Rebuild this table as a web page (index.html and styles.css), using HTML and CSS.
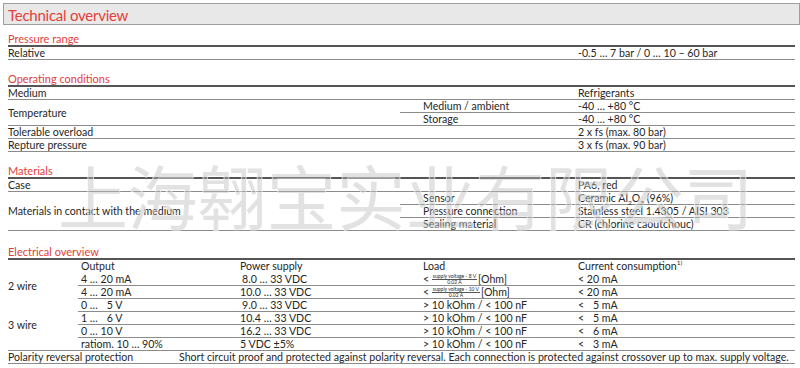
FILE: index.html
```html
<!DOCTYPE html>
<html>
<head>
<meta charset="utf-8">
<link rel="stylesheet" href="styles.css">
</head>
<body>
<div class="page">
  <div class="header"><h1 class="title">Technical overview</h1></div>

  <section class="sec sec-first">
    <h2 class="sec-title">Pressure range</h2>
    <div class="grid3">
      <div class="cell">Relative</div>
      <div class="cell"></div>
      <div class="cell">-0.5 … 7 bar / 0 … 10 – 60 bar</div>
    </div>
  </section>

  <section class="sec">
    <h2 class="sec-title">Operating conditions</h2>
    <div class="grid3">
      <div class="cell">Medium</div>
      <div class="cell"></div>
      <div class="cell">Refrigerants</div>
      <div class="cell span2 mid">Temperature</div>
      <div class="cell sub">Medium / ambient</div>
      <div class="cell">-40 … +80 °C</div>
      <div class="cell sub">Storage</div>
      <div class="cell">-40 … +80 °C</div>
      <div class="cell">Tolerable overload</div>
      <div class="cell"></div>
      <div class="cell">2 x fs (max. 80 bar)</div>
      <div class="cell">Repture pressure</div>
      <div class="cell"></div>
      <div class="cell">3 x fs (max. 90 bar)</div>
    </div>
  </section>

  <section class="sec">
    <h2 class="sec-title">Materials</h2>
    <div class="grid3">
      <div class="cell">Case</div>
      <div class="cell"></div>
      <div class="cell">PA6, red</div>
      <div class="cell span3 mid">Materials in contact with the medium</div>
      <div class="cell sub">Sensor</div>
      <div class="cell">Ceramic Al<sub>2</sub>O<sub>3</sub> (96%)</div>
      <div class="cell sub">Pressure connection</div>
      <div class="cell">Stainless steel 1.4305 / AISI 303</div>
      <div class="cell sub">Sealing material</div>
      <div class="cell">CR (chlorine caoutchouc)</div>
    </div>
  </section>

  <section class="sec sec-elec">
    <h2 class="sec-title">Electrical overview</h2>
    <div class="grid5">
      <div class="cell nob"></div>
      <div class="cell nob out">Output</div>
      <div class="cell nob">Power supply</div>
      <div class="cell nob">Load</div>
      <div class="cell nob">Current consumption<sup>1)</sup></div>

      <div class="cell nob span2 mid">2 wire</div>
      <div class="cell out">4 … 20 mA</div>
      <div class="cell pad">8.0 … 33 VDC</div>
      <div class="cell">&lt; <span class="frac"><span class="num">supply voltage - 8 V</span><span class="den">0.02 A</span></span>[Ohm]</div>
      <div class="cell">&lt; 20 mA</div>
      <div class="cell out">4 … 20 mA</div>
      <div class="cell">10.0 … 33 VDC</div>
      <div class="cell">&lt; <span class="frac"><span class="num">supply voltage - 10 V</span><span class="den">0.02 A</span></span>[Ohm]</div>
      <div class="cell">&lt; 20 mA</div>

      <div class="cell span4 mid">3 wire</div>
      <div class="cell out">0 … &#8199;5 V</div>
      <div class="cell pad">9.0 … 33 VDC</div>
      <div class="cell">&gt; 10 kOhm / &lt; 100 nF</div>
      <div class="cell">&lt; &#8199;5 mA</div>
      <div class="cell out">1 … &#8199;6 V</div>
      <div class="cell">10.4 … 33 VDC</div>
      <div class="cell">&gt; 10 kOhm / &lt; 100 nF</div>
      <div class="cell">&lt; &#8199;5 mA</div>
      <div class="cell out">0 … 10 V</div>
      <div class="cell">16.2 … 33 VDC</div>
      <div class="cell">&gt; 10 kOhm / &lt; 100 nF</div>
      <div class="cell">&lt; &#8199;6 mA</div>
      <div class="cell out">ratiom. 10 … 90%</div>
      <div class="cell">5 VDC ±5%</div>
      <div class="cell">&gt; 10 kOhm / &lt; 100 nF</div>
      <div class="cell">&lt; &#8199;3 mA</div>
    </div>
    <div class="polarity">
      <div class="cell">Polarity reversal protection</div>
      <div class="cell">Short circuit proof and protected against polarity reversal. Each connection is protected against crossover up to max. supply voltage.</div>
    </div>
  </section>

  <div class="watermark">上海翱宝实业有限公司</div>
</div>
</body>
</html>
```

FILE: styles.css
```css
html, body {
  margin: 0;
  padding: 0;
  background: #fff;
}

.page {
  position: relative;
  width: 800px;
  height: 368px;
  overflow: hidden;
  font-family: "Lato", "Liberation Sans", sans-serif;
  font-size: 10.6px;
  color: #262626;
}

.header {
  margin: 3px 0 0 3px;
  height: 20px;
  background: #e8e8e8;
  border: 1.5px solid #9d9d9d;
  padding-left: 4px;
  display: flex;
  align-items: center;
}

.title {
  margin: 0;
  font-weight: normal;
  font-size: 15px;
  letter-spacing: -0.25px;
  color: #e2403a;
  line-height: 20px;
  padding-top: 1px;
}

.sec {
  margin: 0 5px 0 8px;
}

.sec-title {
  margin: 12px 0 0 0;
  font-weight: normal;
  font-size: 11px;
  line-height: 13px;
  color: #e2403a;
  border-bottom: 2px solid #555;
}

.sec-first .sec-title {
  margin-top: 7px;
}

.sec-elec .sec-title {
  margin-top: 14px;
}

.grid3 {
  display: grid;
  grid-template-columns: 392px 178px 1fr;
  grid-auto-rows: 13px;
}

.cell {
  box-sizing: border-box;
  line-height: 12px;
  border-bottom: 1px solid #8c8c8c;
  white-space: nowrap;
}

.sub {
  padding-left: 23px;
}

.span2 { grid-row: span 2; }
.span3 { grid-row: span 3; }
.span4 { grid-row: span 4; }

.mid {
  display: flex;
  align-items: center;
}

.grid5 {
  display: grid;
  grid-template-columns: 70px 162px 183px 155px 1fr;
  grid-auto-rows: 13px;
}

.nob {
  border-bottom-color: transparent;
}

.out {
  padding-left: 3px;
}

.pad {
  padding-left: 2px;
}

sub, sup {
  font-size: 6.5px;
  line-height: 0;
}

.frac {
  display: inline-flex;
  flex-direction: column;
  align-items: center;
  vertical-align: 5px;
  font-size: 5px;
  line-height: 4.5px;
  margin-right: 1px;
}

.num {
  border-bottom: 0.5px solid #555;
  padding: 0 1px;
}

.polarity {
  display: grid;
  grid-template-columns: 171px 1fr;
  grid-auto-rows: 13px;
}

.watermark {
  position: absolute;
  left: 58px;
  top: 160px;
  font-family: "Noto Sans CJK SC", sans-serif;
  font-size: 70px;
  line-height: 1;
  letter-spacing: -0.5px;
  color: rgba(185, 185, 185, 0.42);
  -webkit-text-stroke: 1px rgba(255, 255, 255, 0.7);
  paint-order: stroke fill;
  white-space: nowrap;
  pointer-events: none;
}
```
